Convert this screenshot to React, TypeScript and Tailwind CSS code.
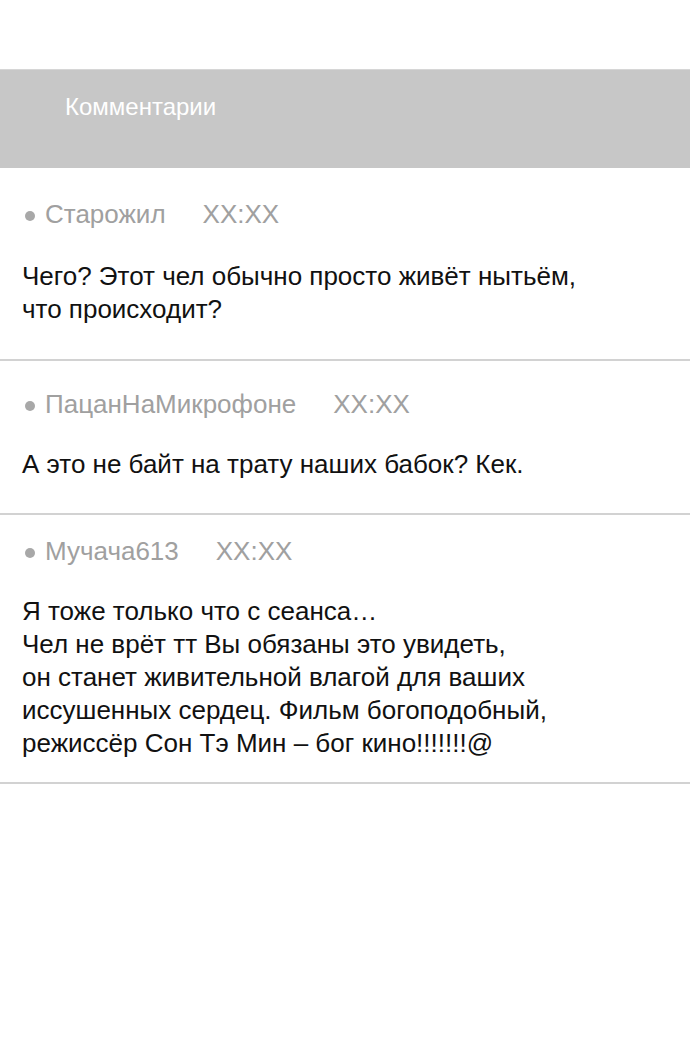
const comments = [
  {
    name: "Старожил",
    pad: "pt-[30px] pb-[33px]",
    gap: "mt-[29px]",
    lines: ["Чего? Этот чел обычно просто живёт нытьём,", "что происходит?"],
  },
  {
    name: "ПацанНаМикрофоне",
    pad: "pt-[27px] pb-[32px]",
    gap: "mt-[27px]",
    lines: ["А это не байт на трату наших бабок? Кек."],
  },
  {
    name: "Мучача613",
    pad: "pt-[20px] pb-[22px]",
    gap: "mt-[27px]",
    lines: [
      "Я тоже только что с сеанса…",
      "Чел не врёт тт Вы обязаны это увидеть,",
      "он станет живительной влагой для ваших",
      "иссушенных сердец. Фильм богоподобный,",
      "режиссёр Сон Тэ Мин – бог кино!!!!!!!@",
    ],
  },
];

export default function App() {
  return (
    <div className="w-[690px] h-[1064px] bg-white font-['Liberation_Sans',Arial,sans-serif] overflow-hidden">
      <div className="h-[69px]" />
      {/* header */}
      <div className="h-[99px] bg-[#c7c7c7] border-t border-[#d6d6d6] pl-[65px] pt-[20px]">
        <h2 className="text-[24px] leading-[33px] text-white">Комментарии</h2>
      </div>

      {comments.map((c) => (
        <div key={c.name} className={`border-b-2 border-[#d2d2d2] pl-[22px] ${c.pad}`}>
          <div className="flex items-center text-[26px] leading-[33px] text-[#a0a0a0]">
            <span className="w-[10px] h-[10px] rounded-full bg-[#a8a8a8] ml-[3px] mr-[10px] mt-[2px]" />
            <span>{c.name}</span>
            <span className="ml-[37px]">XX:XX</span>
          </div>
          <div className={`${c.gap} text-[26px] leading-[33px] text-[#111111]`}>
            {c.lines.map((l, i) => (
              <p key={i}>{l}</p>
            ))}
          </div>
        </div>
      ))}
    </div>
  );
}
